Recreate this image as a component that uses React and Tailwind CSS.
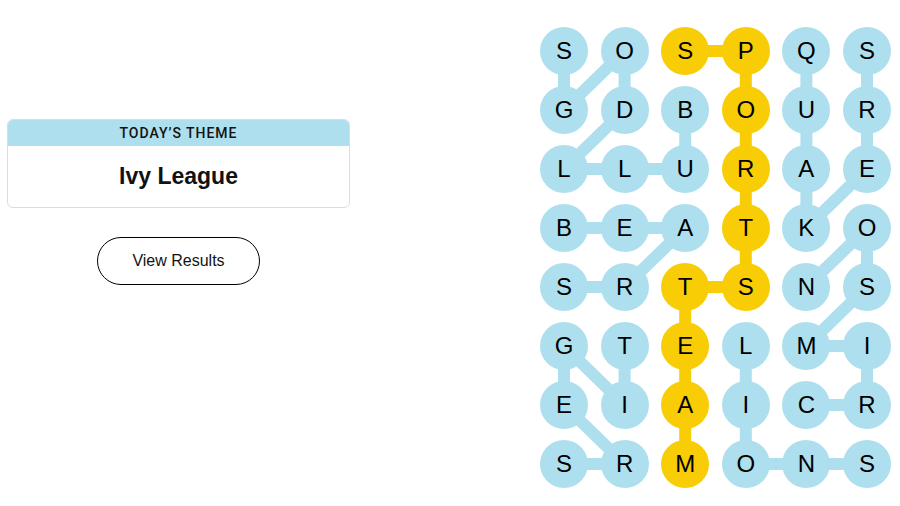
import React from 'react';

const BLUE = '#aedfee';
const YELLOW = '#f8cd05';

const GRID = [
  'SOSPQS',
  'GDBOUR',
  'LLURAE',
  'BEATKO',
  'SRTSNS',
  'GTELMI',
  'EIAICR',
  'SRMONS',
];

// each found word as a path of [row, col]
const WORDS = [
  { color: BLUE, path: [[1, 2], [2, 2], [2, 1], [2, 0], [1, 1], [0, 1], [1, 0], [0, 0]] },
  { color: BLUE, path: [[0, 4], [1, 4], [2, 4], [3, 4], [2, 5], [1, 5], [0, 5]] },
  { color: BLUE, path: [[6, 4], [6, 5], [5, 5], [5, 4], [4, 5], [3, 5], [4, 4]] },
  { color: BLUE, path: [[5, 3], [6, 3], [7, 3], [7, 4], [7, 5]] },
  { color: BLUE, path: [[3, 0], [3, 1], [3, 2], [4, 1], [4, 0]] },
  { color: BLUE, path: [[5, 1], [6, 1], [5, 0], [6, 0], [7, 1], [7, 0]] },
  { color: YELLOW, path: [[0, 2], [0, 3], [1, 3], [2, 3], [3, 3], [4, 3], [4, 2], [5, 2], [6, 2], [7, 2]] },
];

const cx = (c) => 24 + c * 60.6;
const cy = (r) => 24 + r * 59;

const colorAt = (r, c) => {
  const w = WORDS.find((w) => w.path.some(([pr, pc]) => pr === r && pc === c));
  return w ? w.color : BLUE;
};

function Board() {
  return (
    <div className="relative">
      <svg className="absolute inset-0" width="351" height="461">
        {WORDS.map((w, i) => (
          <polyline
            key={i}
            points={w.path.map(([r, c]) => `${cx(c)},${cy(r)}`).join(' ')}
            fill="none"
            stroke={w.color}
            strokeWidth="12"
            strokeLinejoin="round"
          />
        ))}
      </svg>
      <div className="relative grid grid-cols-[repeat(6,48px)] gap-x-[12.6px] gap-y-[11px]">
        {GRID.map((row, r) =>
          row.split('').map((ch, c) => (
            <div
              key={`${r}-${c}`}
              className="w-12 h-12 rounded-full flex items-center justify-center text-[24px] text-black font-['Liberation_Sans',Arial,sans-serif]"
              style={{ backgroundColor: colorAt(r, c) }}
            >
              {ch}
            </div>
          ))
        )}
      </div>
    </div>
  );
}

export default function App() {
  return (
    <div className="flex w-[900px] h-[506px] bg-white font-['Liberation_Sans',Arial,sans-serif] text-black">
      <div className="w-[343px] ml-[7px] pt-[119px] flex flex-col items-center">
        <div className="w-full rounded-md border border-[#dcdcdc] overflow-hidden">
          <div className="h-[26px] bg-[#aedfee] flex items-center justify-center text-[14px] font-medium tracking-[0.07em] uppercase font-['Roboto',sans-serif] text-[#121212]">
            Today’s Theme
          </div>
          <div className="h-[61px] flex items-center justify-center text-[23px] font-bold text-[#121212]">
            Ivy League
          </div>
        </div>
        <button className="mt-[29px] w-[163px] h-[48px] rounded-full border border-black text-[16px] bg-white text-[#121212]">
          View Results
        </button>
      </div>
      <div className="ml-[190px] pt-[27px]">
        <Board />
      </div>
    </div>
  );
}
